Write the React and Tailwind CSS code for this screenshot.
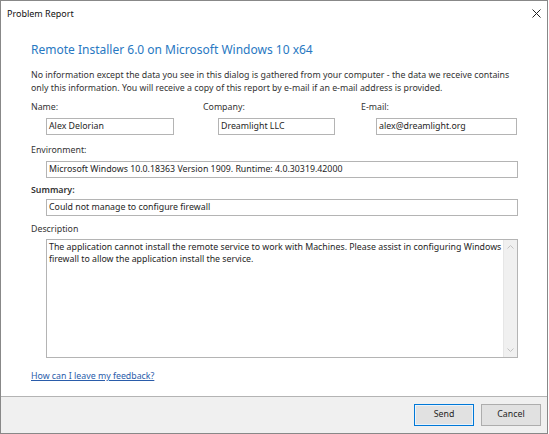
import React from 'react';

function TextBox({ value, width }) {
  return (
    <div
      className="h-[17px] border border-[#b4b4b4] bg-white pl-[2px] text-[8.8px] leading-[15px] text-[#1e1e1e] whitespace-nowrap overflow-hidden"
      style={{ width }}
    >
      {value}
    </div>
  );
}

function Field({ label, value, width, boxWidth }) {
  return (
    <div className="flex flex-col" style={{ width }}>
      <div className="h-[13px] text-[8.8px] leading-[13px] text-[#333]">{label}</div>
      <div className="mt-[4px] ml-[15px]">
        <TextBox value={value} width={boxWidth} />
      </div>
    </div>
  );
}

function Chevron({ up }) {
  return (
    <svg width="7" height="4" viewBox="0 0 7 4" className="block">
      <path d={up ? 'M0.5 3.5 L3.5 0.5 L6.5 3.5' : 'M0.5 0.5 L3.5 3.5 L6.5 0.5'} fill="none" stroke="#c2c2c2" strokeWidth="1" />
    </svg>
  );
}

export default function App() {
  return (
    <div className="w-[549px] h-[434px] bg-white" style={{ fontFamily: '"Noto Sans", "Open Sans", sans-serif' }}>
      <div className="w-[548px] h-[434px] border border-[#888] flex flex-col bg-white">
        {/* title bar */}
        <div className="h-[25px] flex items-center justify-between pl-[6px] pr-[6px]">
          <span className="text-[9px] text-[#111]">Problem Report</span>
          <svg width="9" height="9" viewBox="0 0 9 9">
            <path d="M0.5 0.5 L8.5 8.5 M8.5 0.5 L0.5 8.5" stroke="#222" strokeWidth="1" />
          </svg>
        </div>

        {/* content */}
        <div className="flex-1 pl-[30px] pr-[30px]">
          <div className="mt-[14px] h-[20px] text-[12px] leading-[20px] text-[#2878c2] whitespace-nowrap">
            Remote Installer 6.0 on Microsoft Windows 10 x64
          </div>
          <div className="mt-[9px] text-[8.8px] leading-[13px] text-[#333] whitespace-nowrap">
            <div>No information except the data you see in this dialog is gathered from your computer - the data we receive contains</div>
            <div>only this information. You will receive a copy of this report by e-mail if an e-mail address is provided.</div>
          </div>

          <div className="mt-[6px] flex">
            <Field label="Name:" value="Alex Delorian" width={172} boxWidth={128} />
            <Field label="Company:" value="Dreamlight LLC" width={158} boxWidth={117} />
            <Field label="E-mail:" value="alex@dreamlight.org" width={156} boxWidth={141} />
          </div>

          <div className="mt-[9px] h-[13px] text-[8.8px] leading-[13px] text-[#333]">Environment:</div>
          <div className="mt-[4px] ml-[15px]">
            <TextBox value="Microsoft Windows 10.0.18363 Version 1909. Runtime: 4.0.30319.42000" width={472} />
          </div>

          <div className="mt-[6px] h-[13px] text-[8.8px] leading-[13px] font-semibold text-[#333]">Summary:</div>
          <div className="mt-[2px] ml-[15px]">
            <TextBox value="Could not manage to configure firewall" width={472} />
          </div>

          <div className="mt-[7px] h-[13px] text-[8.8px] leading-[13px] text-[#333]">Description</div>
          <div className="mt-[3px] ml-[15px] w-[472px] h-[119px] border border-[#b4b4b4] flex">
            <div className="flex-1 pl-[2px] pt-[1px] text-[8.8px] leading-[12px] text-[#1e1e1e] whitespace-nowrap overflow-hidden">
              <div>The application cannot install the remote service to work with Machines. Please assist in configuring Windows</div>
              <div>firewall to allow the application install the service.</div>
            </div>
            <div className="w-[14px] bg-[#f0f0f0] border-l border-[#e6e6e6] flex flex-col items-center justify-between py-[5px]">
              <Chevron up />
              <Chevron />
            </div>
          </div>

          <div className="mt-[12px] h-[13px] text-[8.8px] leading-[13px]">
            <a href="#" className="text-[#2a5caa] underline">How can I leave my feedback?</a>
          </div>
        </div>

        {/* footer */}
        <div className="h-[37px] border-t border-[#b4b4b4] bg-[#f0f0f0] flex justify-end items-start pt-[7px] pr-[6px] gap-[7px]">
          <button
            type="button"
            className="w-[60px] h-[22px] border border-[#0078d7] bg-[#e1e1e1] text-[8.8px] text-[#1e1e1e] shadow-[inset_0_0_0_1px_#e9f3fc]"
          >
            Send
          </button>
          <button
            type="button"
            className="w-[60px] h-[22px] border border-[#adadad] bg-[#e1e1e1] text-[8.8px] text-[#1e1e1e]"
          >
            Cancel
          </button>
        </div>
      </div>
    </div>
  );
}
